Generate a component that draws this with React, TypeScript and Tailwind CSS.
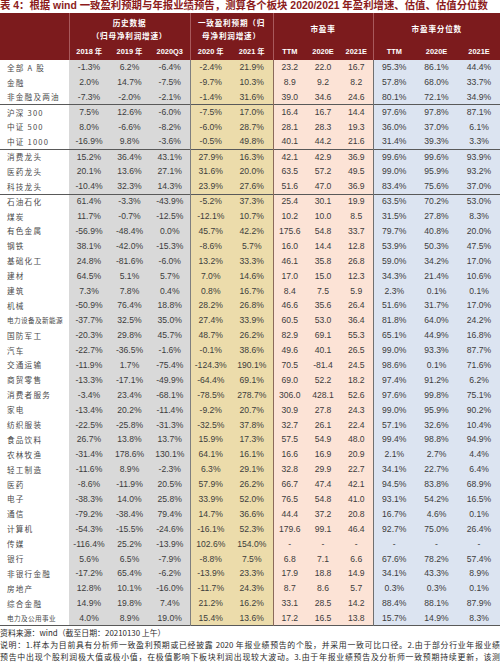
import React from "react";

type Row = {
  name: string;
  small?: boolean;
  values: string[];
  line?: boolean;
};

const rows: Row[] = [
  { name: "全部 A 股", values: ["-1.3%", "6.2%", "-6.4%", "-2.4%", "21.9%", "23.2", "22.0", "16.7", "95.3%", "86.1%", "44.4%"] },
  { name: "金融", values: ["2.0%", "14.7%", "-7.5%", "-9.7%", "10.3%", "8.9", "9.2", "8.2", "57.8%", "68.0%", "33.7%"] },
  { name: "非金融及两油", line: true, values: ["-7.3%", "-2.0%", "-2.1%", "-1.4%", "31.6%", "39.0", "34.6", "24.6", "80.1%", "72.1%", "34.9%"] },
  { name: "沪深 300", values: ["7.5%", "12.6%", "-6.0%", "-7.5%", "17.0%", "16.4", "16.7", "14.4", "97.6%", "97.8%", "87.1%"] },
  { name: "中证 500", values: ["8.0%", "-6.6%", "-8.2%", "-6.0%", "28.7%", "28.1", "28.3", "19.3", "36.0%", "37.0%", "6.1%"] },
  { name: "中证 1000", line: true, values: ["-16.9%", "9.8%", "-3.6%", "-0.5%", "49.8%", "40.1", "44.2", "21.6", "31.4%", "39.3%", "3.3%"] },
  { name: "消费龙头", values: ["15.2%", "36.4%", "43.1%", "27.9%", "16.3%", "42.1", "42.9", "36.9", "99.6%", "99.6%", "93.9%"] },
  { name: "医药龙头", values: ["20.1%", "13.6%", "27.1%", "31.6%", "20.0%", "63.5", "57.2", "49.5", "99.0%", "95.9%", "93.2%"] },
  { name: "科技龙头", line: true, values: ["-10.4%", "32.3%", "14.3%", "23.9%", "27.6%", "51.6", "47.0", "36.9", "83.4%", "75.6%", "37.0%"] },
  { name: "石油石化", values: ["61.4%", "-3.3%", "-43.9%", "-5.2%", "37.3%", "25.4", "30.1", "19.9", "63.5%", "70.2%", "53.0%"] },
  { name: "煤炭", values: ["11.7%", "-0.7%", "-12.5%", "-12.1%", "10.7%", "10.2", "10.0", "8.5", "31.5%", "27.8%", "8.3%"] },
  { name: "有色金属", values: ["-56.9%", "-48.4%", "0.0%", "45.7%", "42.2%", "175.6", "54.8", "33.7", "79.7%", "40.8%", "20.0%"] },
  { name: "钢铁", values: ["38.1%", "-42.0%", "-15.3%", "-8.6%", "5.7%", "16.0", "14.4", "12.8", "53.9%", "50.3%", "47.5%"] },
  { name: "基础化工", values: ["24.8%", "-81.6%", "-6.0%", "13.2%", "33.3%", "46.1", "35.8", "26.8", "59.0%", "34.2%", "17.0%"] },
  { name: "建材", values: ["64.5%", "5.1%", "5.7%", "7.0%", "14.6%", "17.0", "15.0", "12.3", "34.3%", "21.4%", "10.6%"] },
  { name: "建筑", values: ["7.3%", "7.8%", "0.4%", "0.8%", "16.7%", "8.4", "7.5", "5.9", "2.3%", "0.1%", "0.1%"] },
  { name: "机械", values: ["-50.9%", "76.4%", "18.8%", "28.2%", "26.8%", "46.6", "35.6", "26.4", "51.6%", "31.7%", "17.0%"] },
  { name: "电力设备及新能源", small: true, values: ["-37.7%", "32.5%", "35.0%", "27.4%", "33.9%", "60.5", "53.0", "36.4", "81.8%", "64.0%", "24.2%"] },
  { name: "国防军工", values: ["-20.3%", "29.8%", "45.7%", "48.7%", "26.2%", "82.9", "69.1", "55.3", "65.1%", "44.9%", "16.8%"] },
  { name: "汽车", values: ["-22.7%", "-36.5%", "-1.6%", "-0.1%", "38.6%", "49.6", "40.1", "26.5", "99.0%", "93.3%", "87.7%"] },
  { name: "交通运输", values: ["-11.9%", "1.7%", "-75.4%", "-124.3%", "190.1%", "70.5", "-81.4", "24.5", "98.6%", "0.1%", "71.6%"] },
  { name: "商贸零售", values: ["-13.3%", "-17.1%", "-49.9%", "-64.4%", "69.1%", "69.0", "52.2", "18.2", "97.4%", "91.2%", "6.2%"] },
  { name: "消费者服务", values: ["-3.4%", "23.4%", "-68.1%", "-78.5%", "278.7%", "306.0", "428.1", "52.6", "97.6%", "99.8%", "75.1%"] },
  { name: "家电", values: ["-13.4%", "20.2%", "-11.4%", "-9.2%", "20.7%", "30.9", "27.8", "24.3", "99.0%", "95.9%", "90.2%"] },
  { name: "纺织服装", values: ["-22.5%", "-25.8%", "-31.3%", "-32.5%", "37.8%", "32.7", "26.1", "22.4", "57.1%", "32.6%", "10.4%"] },
  { name: "食品饮料", values: ["26.7%", "13.8%", "13.7%", "15.9%", "17.3%", "57.5", "54.9", "48.0", "99.4%", "98.8%", "94.9%"] },
  { name: "农林牧渔", values: ["-31.4%", "178.6%", "130.1%", "64.1%", "16.1%", "16.6", "16.9", "20.9", "2.1%", "2.7%", "4.4%"] },
  { name: "轻工制造", values: ["-11.6%", "8.9%", "-2.3%", "6.3%", "29.1%", "32.8", "29.9", "22.7", "34.1%", "22.7%", "6.4%"] },
  { name: "医药", values: ["-8.6%", "-11.9%", "20.5%", "57.9%", "26.2%", "66.7", "47.4", "42.1", "94.5%", "83.8%", "68.9%"] },
  { name: "电子", values: ["-38.3%", "14.0%", "25.8%", "33.9%", "52.0%", "76.5", "54.8", "41.0", "93.1%", "54.2%", "16.5%"] },
  { name: "通信", values: ["-79.2%", "-38.4%", "79.4%", "14.7%", "36.6%", "44.4", "37.2", "20.8", "16.7%", "4.6%", "0.1%"] },
  { name: "计算机", values: ["-54.3%", "-15.5%", "-24.6%", "-16.1%", "52.3%", "179.6", "99.1", "46.4", "92.7%", "75.0%", "26.4%"] },
  { name: "传媒", values: ["-116.4%", "25.2%", "-13.9%", "102.6%", "154.0%", "-", "-", "-", "-", "-", "-"] },
  { name: "银行", values: ["5.6%", "6.5%", "-7.9%", "-8.8%", "7.5%", "6.8", "7.1", "6.6", "67.6%", "78.2%", "57.4%"] },
  { name: "非银行金融", values: ["-17.2%", "65.4%", "-6.2%", "-13.9%", "23.3%", "17.9", "18.8", "14.9", "34.1%", "43.3%", "8.9%"] },
  { name: "房地产", values: ["12.8%", "10.1%", "-16.0%", "-11.7%", "24.3%", "8.7", "8.6", "5.7", "0.3%", "0.3%", "0.1%"] },
  { name: "综合金融", values: ["14.9%", "19.8%", "7.4%", "21.2%", "16.2%", "33.1", "28.5", "14.2", "88.4%", "88.1%", "87.9%"] },
  { name: "电力及公用事业", small: true, line: true, values: ["4.0%", "8.9%", "19.0%", "15.4%", "13.6%", "17.2", "16.5", "13.8", "15.7%", "14.9%", "8.3%"] },
];

const years = ["2018 年", "2019 年", "2020Q3", "2020 年", "2021 年", "TTM", "2020E", "2021E", "TTM", "2020E", "2021E"];

// column look by index: background block and left rule where a block starts
const cellClass = (i: number) => {
  if (i < 3) return "bg-[#d9d9d9]";
  if (i === 3) return "bg-[#ecdcab] border-l border-[#7f7f7f]";
  if (i === 4) return "bg-[#ecdcab]";
  if (i === 5) return "bg-[#fce3d6] border-l border-[#8a6a5a]";
  if (i < 8) return "bg-[#fce3d6]";
  if (i === 8) return "bg-[#dce4f1] border-l border-[#6f6f6f]";
  return "bg-[#dce4f1]";
};

const headBorder = (i: number) =>
  i === 0 || i === 3 || i === 5 || i === 8 ? "border-l border-[#a8595b]" : "";

const cjk = "font-['Noto_Sans_CJK_SC',sans-serif]";
const latin = "font-['Liberation_Sans','Noto_Sans_CJK_SC',sans-serif]";

const App = () => {
  return (
    <div className="w-[500px] h-[662px] overflow-hidden bg-white">
      <div className={`h-[13px] flex items-center text-[10.4px] font-bold leading-none text-[#8c1c1c] whitespace-nowrap ${latin}`}>
        表 4：根据 wind 一致盈利预期与年报业绩预告，测算各个板块 2020/2021 年盈利增速、估值、估值分位数
      </div>

      <table className="w-[500px] table-fixed border-collapse">
        <colgroup>
          <col className="w-[69px]" />
          <col className="w-[40px]" />
          <col className="w-[41px]" />
          <col className="w-[40px]" />
          <col className="w-[41px]" />
          <col className="w-[42px]" />
          <col className="w-[33px]" />
          <col className="w-[34px]" />
          <col className="w-[33px]" />
          <col className="w-[42px]" />
          <col className="w-[43px]" />
          <col className="w-[42px]" />
        </colgroup>
        <thead className={`bg-[#7c1b1d] text-white font-bold ${cjk}`}>
          <tr className="h-[31px] text-[7.6px] leading-[13px] tracking-[0.8px]">
            <th rowSpan={2} className="p-0" />
            <th colSpan={3} className="p-0 border-l border-[#a8595b] font-bold">
              历史数据
              <br />
              （归母净利润增速）
            </th>
            <th colSpan={2} className="p-0 border-l border-[#a8595b] font-bold">
              一致盈利预期（归
              <br />
              母净利润增速）
            </th>
            <th colSpan={3} className="p-0 border-l border-[#a8595b] font-bold">
              市盈率
            </th>
            <th colSpan={3} className="p-0 border-l border-[#a8595b] font-bold">
              市盈率分位数
            </th>
          </tr>
          <tr className={`h-[16px] text-[7.4px] leading-none ${latin}`}>
            {years.map((y, i) => (
              <th key={i} className={`p-0 font-bold whitespace-nowrap ${headBorder(i)}`}>
                {y}
              </th>
            ))}
          </tr>
        </thead>
        <tbody>
          {rows.map((r) => (
            <tr key={r.name} className={`h-[14.9px] ${r.line ? "border-b border-[#595959]" : ""}`}>
              <td
                className={`p-0 pl-[7px] whitespace-nowrap text-[#4a4a4a] leading-none ${cjk} ${
                  r.small ? "text-[6.6px] tracking-[0.4px]" : "text-[7.6px] tracking-[1.2px]"
                }`}
              >
                {r.name}
              </td>
              {r.values.map((v, i) => (
                <td
                  key={i}
                  className={`p-0 text-center text-[8.6px] leading-none text-[#3c3c3c] whitespace-nowrap ${latin} ${cellClass(i)}`}
                >
                  {v}
                </td>
              ))}
            </tr>
          ))}
        </tbody>
      </table>

      <div className={`pt-[1px] text-[7.9px] leading-[12px] text-[#2a2a2a] ${cjk}`}>
        <div className="whitespace-nowrap">资料来源：wind（截至日期：20210130 上午）</div>
        <div className="whitespace-nowrap text-justify [text-align-last:justify] overflow-hidden">
          说明：1.样本为目前具有分析师一致盈利预期或已经披露 2020 年报业绩预告的个股，并采用一致可比口径。2.由于部分行业年报业绩
        </div>
        <div className="whitespace-nowrap text-justify [text-align-last:justify] overflow-hidden">
          预告中出现个股利润极大值或极小值，在极值影响下板块利润出现较大波动。3.由于年报业绩预告及分析师一致预期持续更新，该测
        </div>
      </div>
    </div>
  );
};

export default App;
